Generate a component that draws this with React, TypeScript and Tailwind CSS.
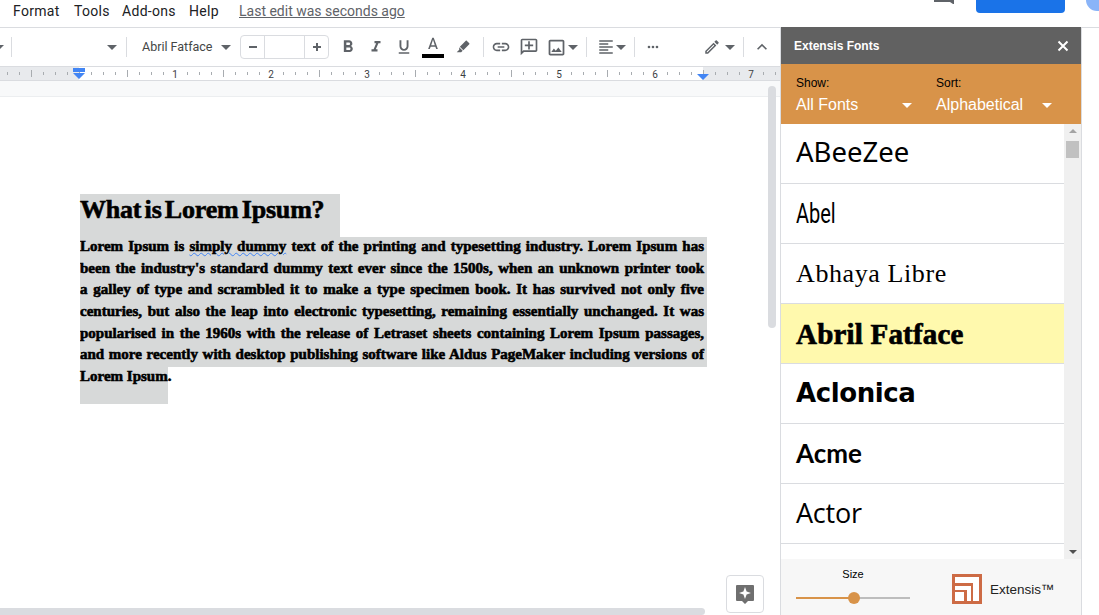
const Icon = ({ d, size = 20, className = '' }: { d: string; size?: number; className?: string }) => (
  <svg viewBox="0 0 24 24" width={size} height={size} className={`shrink-0 fill-[#5f6368] ${className}`}>
    <path d={d} />
  </svg>
)

const Caret = ({ className = 'border-t-[#5f6368]' }: { className?: string }) => (
  <span className={`block w-0 h-0 shrink-0 border-x-[5px] border-x-transparent border-t-[5px] ${className}`} />
)

const Sep = () => <span className="block w-px h-5 bg-[#dadce0] shrink-0" />

const paths = {
  bold: 'M15.6 10.79c.97-.67 1.65-1.77 1.65-2.79 0-2.26-1.75-4-4-4H7v14h7.04c2.09 0 3.71-1.7 3.71-3.79 0-1.52-.86-2.82-2.15-3.42zM10 6.5h3c.83 0 1.5.67 1.5 1.5s-.67 1.5-1.5 1.5h-3v-3zm3.5 9H10v-3h3.5c.83 0 1.5.67 1.5 1.5s-.67 1.5-1.5 1.5z',
  italic: 'M10 4v3h2.21l-3.42 8H6v3h8v-3h-2.21l3.42-8H18V4z',
  underline: 'M12 17c3.31 0 6-2.69 6-6V3h-2.5v8c0 1.93-1.57 3.5-3.5 3.5S8.5 12.93 8.5 11V3H6v8c0 3.31 2.69 6 6 6zm-7 2v2h14v-2H5z',
  marker: 'M17.6 2.6l3.8 3.8c.4.4.4 1 0 1.4l-8.9 8.9-5.2-5.2 8.9-8.9c.4-.4 1-.4 1.4 0zM6.3 12.5l5.2 5.2-2.3 2.3H2.6l3.7-3.7z',
  link: 'M3.9 12c0-1.71 1.39-3.1 3.1-3.1h4V7H7c-2.76 0-5 2.24-5 5s2.24 5 5 5h4v-1.9H7c-1.71 0-3.1-1.39-3.1-3.1zM8 13h8v-2H8v2zm9-6h-4v1.9h4c1.71 0 3.1 1.39 3.1 3.1s-1.39 3.1-3.1 3.1h-4V17h4c2.76 0 5-2.24 5-5s-2.24-5-5-5z',
  comment: 'M2 4c0-1.1.9-2 2-2h16c1.1 0 2 .9 2 2v12c0 1.1-.9 2-2 2H6l-4 4V4zm2 13.17L5.17 16H20V4H4v13.17zM11 5h2v4h4v2h-4v4h-2v-4H7V9h4z',
  image: 'M19 5v14H5V5h14m0-2H5c-1.1 0-2 .9-2 2v14c0 1.1.9 2 2 2h14c1.1 0 2-.9 2-2V5c0-1.1-.9-2-2-2zm-4.86 8.86l-3 3.87L9 13.14 6 17h12l-3.86-5.14z',
  align: 'M3 3h18v2H3zM3 7h12v2H3zM3 11h18v2H3zM3 15h12v2H3zM3 19h18v2H3z',
  more: 'M6 10a2 2 0 100 4 2 2 0 000-4zm6 0a2 2 0 100 4 2 2 0 000-4zm6 0a2 2 0 100 4 2 2 0 000-4z',
  pencil: 'M14.06 9.02l.92.92L5.92 19H5v-.92l9.06-9.06M17.66 3c-.25 0-.51.1-.7.29l-1.83 1.83 3.75 3.75 1.83-1.83c.39-.39.39-1.02 0-1.41l-2.34-2.34c-.2-.2-.45-.29-.71-.29zm-3.6 3.19L3 17.25V21h3.75L17.81 9.94l-3.75-3.75z',
  less: 'M12 8l-6 6 1.41 1.41L12 10.83l4.59 4.58L18 14z',
  colorA: 'M11 1L5.5 16h2.25l1.12-3h6.25l1.12 3h2.25L13 1h-2zm-1.38 10L12 3.67 14.38 11H9.62z',
}

const Ruler = () => {
  const ticks = []
  for (let i = -1; i < 92; i++) {
    const x = 7 + i * 12
    const inch = (i - 6) / 8
    const major = (i - 6) % 8 === 0
    if (major && inch > 0 && inch < 8) {
      ticks.push(
        <text key={i} x={x} y={10.5} textAnchor="middle" fontSize="10" fontFamily="Roboto, sans-serif" fill="#3c4043">
          {inch}
        </text>,
      )
    } else {
      const half = (i - 6) % 4 === 0
      ticks.push(<rect key={i} x={x} y={half ? 3 : 5} width={1} height={half ? 7 : 3} fill="#a8acb0" />)
    }
  }
  return (
    <svg width="780" height="13" className="block">
      <rect x="0" y="0" width="79" height="13" fill="#e8eaed" />
      <rect x="703" y="0" width="77" height="13" fill="#e8eaed" />
      {ticks}
      <rect x="73" y="1" width="12" height="4" fill="#4285f4" />
      <path d="M73 6h12l-6 6zM697 7h12l-6 6z" fill="#4285f4" />
    </svg>
  )
}

const Toolbar = () => (
  <div className="h-[39px] shrink-0 flex items-center relative border-b border-[#dadce0]">
    <span className="ml-[-6px]"><Caret /></span>
    <span className="ml-[7px]"><Sep /></span>
    <span className="ml-[95px]"><Caret /></span>
    <span className="ml-[9px]"><Sep /></span>
    <span className="ml-[15px] text-[12.5px] text-[#444746] w-[79px] whitespace-nowrap">Abril Fatface</span>
    <Caret />
    <div className="ml-[9px] flex items-center h-6 w-[89px] border border-[#dadce0] rounded-sm">
      <span className="w-6 h-full flex items-center justify-center border-r border-[#dadce0]"><span className="w-2 h-0.5 bg-[#5f6368]" /></span>
      <span className="flex-1" />
      <span className="w-6 h-full flex items-center justify-center border-l border-[#dadce0]">
        <svg width="10" height="10" viewBox="0 0 10 10" className="fill-[#5f6368]"><path d="M4 1h2v3h3v2H6v3H4V6H1V4h3z" /></svg>
      </span>
    </div>
    <Icon d={paths.bold} size={20} className="ml-[9px]" />
    <Icon d={paths.italic} size={18} className="ml-[9px]" />
    <Icon d={paths.underline} size={18} className="ml-[10px]" />
    <span className="ml-[9px] w-[22px] flex flex-col items-center">
      <Icon d={paths.colorA} size={18} className="-mb-[1px]" />
      <span className="w-[22px] h-1 bg-black" />
    </span>
    <Icon d={paths.marker} size={16} className="ml-[11px]" />
    <span className="ml-[12px]"><Sep /></span>
    <Icon d={paths.link} size={20} className="ml-[7px]" />
    <Icon d={paths.comment} size={20} className="ml-[8px]" />
    <Icon d={paths.image} size={21} className="ml-[7px]" />
    <span className="ml-[1px]"><Caret /></span>
    <span className="ml-[8px]"><Sep /></span>
    <Icon d={paths.align} size={18} className="ml-[10px]" />
    <span className="ml-[1px]"><Caret /></span>
    <span className="ml-[8px]"><Sep /></span>
    <Icon d={paths.more} size={16} className="ml-[10px]" />
    <Icon d={paths.pencil} size={18} className="ml-[42px]" />
    <span className="ml-[4px]"><Caret /></span>
    <span className="ml-[8px]"><Sep /></span>
    <Icon d={paths.less} size={20} className="ml-[8px]" />
  </div>
)

const bodyLines = [
  'Lorem Ipsum is simply dummy text of the printing and typesetting industry. Lorem Ipsum has',
  "been the industry's standard dummy text ever since the 1500s, when an unknown printer took",
  'a galley of type and scrambled it to make a type specimen book. It has survived not only five',
  'centuries, but also the leap into electronic typesetting, remaining essentially unchanged. It was',
  'popularised in the 1960s with the release of Letraset sheets containing Lorem Ipsum passages,',
  'and more recently with desktop publishing software like Aldus PageMaker including versions of',
]

const fatClass = "font-['Liberation_Serif',serif] font-bold text-black [-webkit-text-stroke:0.6px_black]"

const Doc = () => (
  <div className="flex-1 bg-white pl-[80px] pt-[97px] min-h-0 overflow-hidden">
    <div className={`w-[260px] h-[43px] bg-[#d7d9d9] text-[26px] leading-[31px] [word-spacing:-3px] tracking-[-0.2px] ${fatClass}`}>
      What is Lorem Ipsum?
    </div>
    <div className={`w-[627px] text-[15px] ${fatClass}`}>
      {bodyLines.map((line, i) => (
        <div key={i} className="h-[21.7px] leading-[19px] bg-[#d7d9d9] pr-[3px] text-justify [text-align-last:justify] whitespace-nowrap overflow-hidden">
          {i === 0 ? (
            <>
              Lorem Ipsum is{' '}
              <span className="underline decoration-wavy decoration-[#4285f4] decoration-1 underline-offset-1">simply dummy</span>{' '}
              text of the printing and typesetting industry. Lorem Ipsum has
            </>
          ) : (
            line
          )}
        </div>
      ))}
      <div className="w-[88px] h-[37px] leading-[19px] bg-[#d7d9d9] whitespace-nowrap">Lorem Ipsum.</div>
    </div>
  </div>
)

const fonts = [
  { name: 'ABeeZee', cls: "font-['Noto_Sans',sans-serif] text-[27.5px] -mt-[3px]" },
  { name: 'Abel', cls: "font-['Roboto',sans-serif] text-[27px] scale-x-[0.74] origin-left mt-[2px]" },
  { name: 'Abhaya Libre', cls: "font-['Liberation_Serif',serif] text-[26px] tracking-[0.6px]" },
  { name: 'Abril Fatface', cls: "font-['Liberation_Serif',serif] font-bold text-[29px] tracking-[0.2px] mt-[3px] [-webkit-text-stroke:0.7px_black]", bg: 'bg-[#fff9ad]' },
  { name: 'Aclonica', cls: "font-['DejaVu_Sans',sans-serif] font-bold text-[26px] tracking-[-0.4px]" },
  { name: 'Acme', cls: "font-['Lato',sans-serif] font-bold text-[26px]" },
  { name: 'Actor', cls: "font-['Open_Sans',sans-serif] text-[27px] tracking-[-0.2px]" },
]

const Sidebar = () => (
  <aside className="w-[302px] shrink-0 flex flex-col border-x border-[#dadce0] font-['Liberation_Sans',sans-serif] h-[588px] -mt-px relative">
    <div className="h-[37px] shrink-0 bg-[#616161] text-white flex items-center justify-between pl-[13px] pr-[12px] text-[12px] font-bold">
      <span>Extensis Fonts</span>
      <svg width="12" height="12" viewBox="0 0 12 12"><path d="M1.5 1.5l9 9m0-9l-9 9" stroke="#fff" strokeWidth="2" /></svg>
    </div>
    <div className="h-[60px] shrink-0 bg-[#d89349] flex pl-[15px] pt-[12px]">
      <div className="w-[140px]">
        <div className="text-[12px] leading-[14px] text-black">Show:</div>
        <div className="flex items-center justify-between w-[116px] mt-[5px] text-white text-[16px] leading-[20px]">
          All Fonts <Caret className="border-t-white" />
        </div>
      </div>
      <div>
        <div className="text-[12px] leading-[14px] text-black">Sort:</div>
        <div className="flex items-center justify-between w-[116px] mt-[5px] text-white text-[16px] leading-[20px]">
          Alphabetical <Caret className="border-t-white" />
        </div>
      </div>
    </div>
    <div className="flex-1 min-h-0 flex overflow-hidden">
      <div className="flex-1 min-w-0 bg-white">
        {fonts.map((f) => (
          <div key={f.name} className={`h-[60px] flex items-center pl-[15px] border-b border-[#dadce0] text-black ${f.bg ?? ''}`}>
            <span className={`block whitespace-nowrap ${f.cls}`}>{f.name}</span>
          </div>
        ))}
      </div>
      <div className="w-[17px] bg-[#f0f0f0] flex flex-col items-center justify-between pt-[5px] pb-[5px] relative">
        <span className="w-0 h-0 border-x-[4px] border-x-transparent border-b-[4px] border-b-[#a3a3a3]" />
        <span className="absolute top-[17px] left-[2px] w-[13px] h-[17px] bg-[#c1c1c1]" />
        <span className="w-0 h-0 border-x-[4px] border-x-transparent border-t-[4px] border-t-[#505050]" />
      </div>
    </div>
    <div className="h-[56px] shrink-0 bg-[#f7f7f7] flex pl-[15px] pt-[8px]">
      <div className="w-[114px] flex flex-col items-center">
        <span className="text-[11px] leading-[14px] text-black">Size</span>
        <div className="w-[114px] h-3 mt-[11px] flex items-center relative">
          <span className="w-[58px] h-0.5 bg-[#d89349]" />
          <span className="flex-1 h-0.5 bg-[#bdbdbd]" />
          <span className="absolute left-[52px] w-3 h-3 rounded-full bg-[#d89349]" />
        </div>
      </div>
      <div className="ml-[42px] mt-[7px] flex items-start gap-[8px]">
        <svg width="30" height="30" viewBox="0 0 30 30">
          <rect width="30" height="30" fill="#cd6b45" />
          <path d="M3 3h24v24h-6V9H3z" fill="#fff" />
          <path d="M3 12h16v15h-4V16H3z" fill="#fff" />
          <rect x="3" y="18" width="9" height="9" fill="#fff" />
        </svg>
        <span className="text-[13.5px] leading-[32px] text-[#222]">Extensis™</span>
      </div>
    </div>
  </aside>
)

const App = () => (
  <div className="w-[1099px] h-[615px] overflow-hidden bg-white flex flex-col font-['Roboto',sans-serif]">
    <header className="h-7 shrink-0 flex border-b border-[#dadce0] relative">
      <nav className="flex items-start pl-[13px] pt-[2px] text-[14px] leading-[18px] text-[#202124]">
        <span className="tracking-[0.3px] w-[61px]">Format</span>
        <span className="tracking-[0.3px] w-[48px]">Tools</span>
        <span className="tracking-[0.3px] w-[67px]">Add-ons</span>
        <span className="tracking-[0.3px] w-[50px]">Help</span>
        <span className="underline text-[#5f6368]">Last edit was seconds ago</span>
      </nav>
      <div className="ml-auto flex items-start">
        <svg width="22" height="5" viewBox="0 0 22 5" className="mr-[21px]"><path d="M0 0h20v5h-1l-3-2H0z" fill="#5f6368" transform="translate(1 -1)" /></svg>
        <span className="w-[89px] h-[13px] bg-[#1a73e8] rounded-b-[4px] mr-[21px]" />
        <span className="w-[13px] h-[11px] bg-[#8ab4f8] rounded-bl-full" />
      </div>
    </header>
    <div className="flex-1 min-h-0 flex">
      <main className="w-[780px] shrink-0 flex flex-col relative">
        <Toolbar />
        <div className="h-[14px] border-b border-[#dadce0] shrink-0"><Ruler /></div>
        <div className="h-[16px] bg-[#f8f9fa] border-b border-[#eceef0] shrink-0" />
        <div className="flex-1 min-h-0 overflow-hidden bg-white relative">
          <Doc />
        </div>
        <span className="absolute right-[4px] top-[58px] w-2 h-[242px] rounded bg-[#dadce0]" />
        <span className="absolute left-0 bottom-0 w-[705px] h-[7px] rounded-r bg-[#dadce0]" />
        <span className="absolute right-[16px] bottom-[2px] w-[38px] h-[38px] bg-white border border-[#dadce0] rounded flex items-center justify-center">
          <svg width="20" height="22" viewBox="0 0 20 22">
            <path d="M2 2h16a1 1 0 011 1v14a1 1 0 01-1 1h-5l-3 3-3-3H2a1 1 0 01-1-1V3a1 1 0 011-1z" fill="#6f6f6f" />
            <path d="M10 4l1.6 4.4L16 10l-4.4 1.6L10 16l-1.6-4.4L4 10l4.4-1.6z" fill="#fff" />
          </svg>
        </span>
      </main>
      <Sidebar />
      <div className="flex-1" />
    </div>
  </div>
)

export default App
